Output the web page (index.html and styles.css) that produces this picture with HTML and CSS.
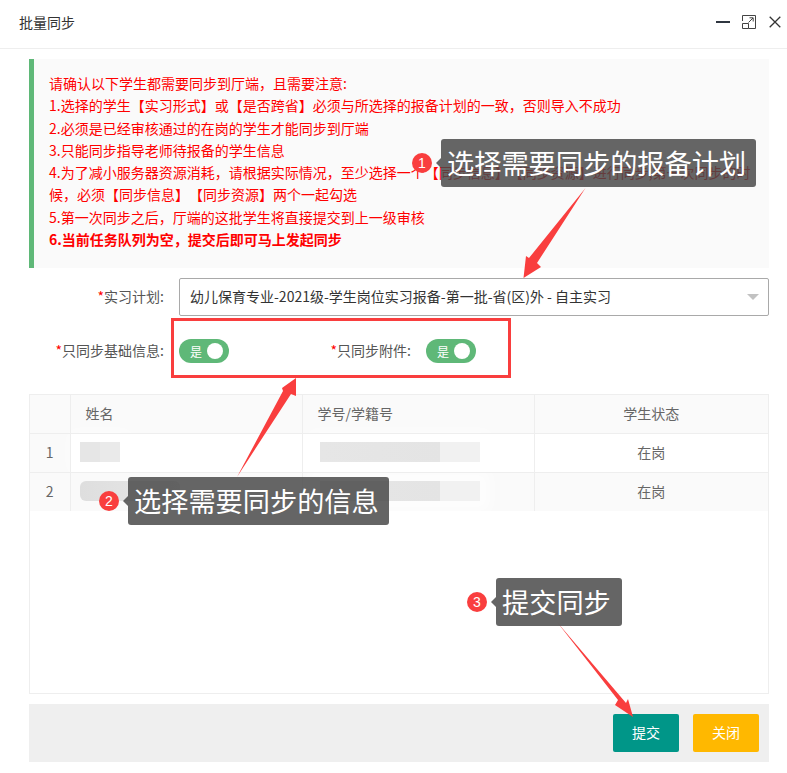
FILE: index.html
```html
<!DOCTYPE html>
<html lang="zh-CN">
<head>
<meta charset="utf-8">
<title>批量同步</title>
<link rel="stylesheet" href="styles.css">
</head>
<body>
<div class="dialog">
  <header class="title-bar">
    <span class="title">批量同步</span>
    <div class="win-tools">
      <svg width="14" height="14" viewBox="0 0 14 14"><rect x="0" y="6" width="14" height="2" fill="#2f3640"/></svg>
      <svg width="14" height="14" viewBox="0 0 14 14" fill="none" stroke="#444" stroke-width="1"><path d="M.5 6V.5H13.5V13.5H6.5"/><path d="M.5 8.5H6.5V13.5H.5Z"/><path d="M6.5 7.5L11 3M7.5 2.8H11.2V6.5"/></svg>
      <svg class="ico-close" width="12" height="12" viewBox="0 0 12 12" fill="none" stroke="#333" stroke-width="1.3"><path d="M.7 .7L11.3 11.3M11.3 .7L.7 11.3"/></svg>
    </div>
  </header>
  <main class="content">
    <section class="notice">
      <p>请确认以下学生都需要同步到厅端，且需要注意:</p>
      <p>1.选择的学生【实习形式】或【是否跨省】必须与所选择的报备计划的一致，否则导入不成功</p>
      <p>2.必须是已经审核通过的在岗的学生才能同步到厅端</p>
      <p>3.只能同步指导老师待报备的学生信息</p>
      <p>4.为了减小服务器资源消耗，请根据实际情况，至少选择一个【同步信息】【同步资源】进行同步,第一次同步的时<br>候，必须【同步信息】【同步资源】两个一起勾选</p>
      <p>5.第一次同步之后，厅端的这批学生将直接提交到上一级审核</p>
      <p class="strong">6.当前任务队列为空，提交后即可马上发起同步</p>
    </section>
    <div class="form-row plan-row">
      <label class="label"><i>*</i>实习计划:</label>
      <div class="select">
        <span>幼儿保育专业-2021级-学生岗位实习报备-第一批-省(区)外 - 自主实习</span>
        <b class="caret"></b>
      </div>
    </div>
    <div class="form-row switch-row">
      <label class="label"><i>*</i>只同步基础信息:</label>
      <div class="switch"><span>是</span><b></b></div>
      <label class="label second"><i>*</i>只同步附件:</label>
      <div class="switch"><span>是</span><b></b></div>
    </div>
    <div class="table-wrap">
      <table>
        <thead>
          <tr><th class="c-idx"></th><th class="c-name left">姓名</th><th class="c-no left">学号/学籍号</th><th>学生状态</th></tr>
        </thead>
        <tbody>
          <tr>
            <td class="c-idx">1</td>
            <td><div class="blur blur-name"></div></td>
            <td><div class="blur blur-no"></div></td>
            <td>在岗</td>
          </tr>
          <tr class="alt">
            <td class="c-idx">2</td>
            <td><div class="blur blur-name wide"></div></td>
            <td><div class="blur blur-no"></div></td>
            <td>在岗</td>
          </tr>
        </tbody>
      </table>
    </div>
    <footer class="footer">
      <button class="btn btn-submit">提交</button>
      <button class="btn btn-close">关闭</button>
    </footer>
  </main>
</div>

<div class="red-box"></div>
<svg class="arrows" width="787" height="773" viewBox="0 0 787 773">
  <polygon fill="#f93e3e" points="585.5,188 537,263 541,267 523.5,278 526,256 529,258"/>
  <polygon fill="#f93e3e" points="237,477 283,391 282,388 296,378 296,396 291,394"/>
  <polygon fill="#f93e3e" points="557,622 626,703 628,699 633,717 615,705 618,700"/>
</svg>
<div class="tip tip-1"><em class="dot">1</em><span class="bubble">选择需要同步的报备计划</span></div>
<div class="tip tip-2"><em class="dot">2</em><span class="bubble">选择需要同步的信息</span></div>
<div class="tip tip-3"><em class="dot">3</em><span class="bubble">提交同步</span></div>
</body>
</html>
```
FILE: styles.css
```css
* { box-sizing: border-box; }
html, body { margin: 0; padding: 0; background: #fff; }
body {
  width: 787px;
  height: 773px;
  overflow: hidden;
  position: relative;
  font-family: "Noto Sans CJK SC", "Liberation Sans", sans-serif;
  font-size: 14px;
  color: #666;
  text-spacing-trim: space-all;
}
.title-bar {
  height: 49px;
  border-bottom: 1px solid #eee;
  padding: 0 6px 4px 19px;
  display: flex;
  align-items: center;
  justify-content: space-between;
}
.title { font-size: 14px; color: #333; }
.win-tools { display: flex; align-items: center; gap: 12px; }
.win-tools svg { display: block; }
.ico-close { margin-left: 1px; }
.content { padding: 10px 18px 0 29px; }
.notice {
  height: 209px;
  padding: 13px 15px;
  border-left: 5px solid #5fb878;
  background: #fafafa;
  color: #f00;
  line-height: 22.3px;
}
.notice p { margin: 0; white-space: nowrap; }
.notice .strong { font-weight: 700; }
.form-row { display: flex; align-items: center; }
.plan-row { margin-top: 10px; height: 38px; }
.switch-row { margin-top: 23px; height: 24px; }
.label {
  flex: none;
  width: 150px;
  padding: 0 15px 2px 0;
  text-align: right;
  color: #555;
  white-space: nowrap;
}
.label i { color: #f00; font-style: normal; }
.label.second { margin-left: 47px; }
.select {
  flex: 1;
  height: 38px;
  border: 1px solid #a9a9a9;
  border-radius: 2px;
  padding: 0 9px 2px 10px;
  display: flex;
  align-items: center;
  justify-content: space-between;
  color: #333;
  background: #fff;
}
.caret {
  width: 0;
  height: 0;
  margin-top: 2px;
  border-left: 6px solid transparent;
  border-right: 6px solid transparent;
  border-top: 6px solid #c2c2c2;
}
.switch {
  flex: none;
  width: 50px;
  height: 24px;
  border-radius: 12px;
  background: #5fb878;
  display: flex;
  align-items: center;
  justify-content: space-between;
  padding: 0 6px 0 11px;
  color: #fff;
  font-size: 12px;
}
.switch b { width: 16px; height: 16px; border-radius: 50%; background: #fff; }
.table-wrap {
  margin-top: 31px;
  height: 300px;
  border: 1px solid #eee;
}
table {
  width: 100%;
  border-collapse: collapse;
  table-layout: fixed;
  border-style: hidden;
}
th, td {
  height: 39px;
  padding: 0 0 2px;
  border: 1px solid #eee;
  text-align: center;
  font-weight: 400;
  color: #666;
}
th { height: 38px; background: #fafafa; }
th.left { text-align: left; padding-left: 15px; }
.c-idx { width: 40px; background: #fafafa; }
.c-name { width: 232px; }
.c-no { width: 232px; }
.alt td { background: #fafafa; }
.blur { height: 20px; box-shadow: 0 0 14px 10px rgba(255, 255, 255, .7); }
.blur-name {
  width: 40px;
  margin-left: 9px;
  background: linear-gradient(90deg, #e6e6e6 50%, #eaeaea 50%);
}
.blur-name.wide {
  width: 100px;
  background: linear-gradient(90deg, #dedede, #e8e8e8);
  border-radius: 6px;
  box-shadow: none;
}
.blur-no {
  width: 160px;
  margin-left: 17px;
  background: linear-gradient(90deg, #e6e6e6 0, #e4e4e4 75%, #f1f1f1 75%, #f1f1f1 100%);
}
.footer {
  margin-top: 10px;
  height: 58px;
  background: #efefef;
  display: flex;
  justify-content: flex-end;
  align-items: center;
  gap: 14px;
  padding-right: 10px;
}
.btn {
  width: 66px;
  height: 38px;
  border: 0;
  border-radius: 2px;
  color: #fff;
  font: inherit;
  font-size: 14px;
  padding: 0 0 2px;
}
.btn-submit { background: #009688; }
.btn-close { background: #ffb800; }

/* annotations laid over the screenshot */
.red-box {
  position: absolute;
  left: 171px;
  top: 318px;
  width: 340px;
  height: 60px;
  border: 3px solid #f93e3e;
}
.arrows { position: absolute; left: 0; top: 0; pointer-events: none; }
.tip { position: absolute; display: flex; align-items: center; height: 48px; }
.tip-1 { left: 412px; top: 139px; }
.tip-2 { left: 99px; top: 477px; }
.tip-3 { left: 467px; top: 578px; }
.dot {
  flex: none;
  width: 20px;
  height: 20px;
  border-radius: 50%;
  background: #f93e3e;
  color: #fff;
  font: 14px/20px "Liberation Sans", sans-serif;
  text-align: center;
  margin-right: 9px;
}
.bubble {
  position: relative;
  height: 48px;
  min-width: 126px;
  padding: 0 10px 0 6px;
  border-radius: 3px;
  background: rgba(72, 72, 72, .84);
  color: #fff;
  font-size: 27.2px;
  line-height: 47px;
  white-space: nowrap;
}
.bubble::before {
  content: "";
  position: absolute;
  left: -5px;
  top: 19px;
  border-top: 5px solid transparent;
  border-bottom: 5px solid transparent;
  border-right: 5px solid rgba(72, 72, 72, .84);
}
```
